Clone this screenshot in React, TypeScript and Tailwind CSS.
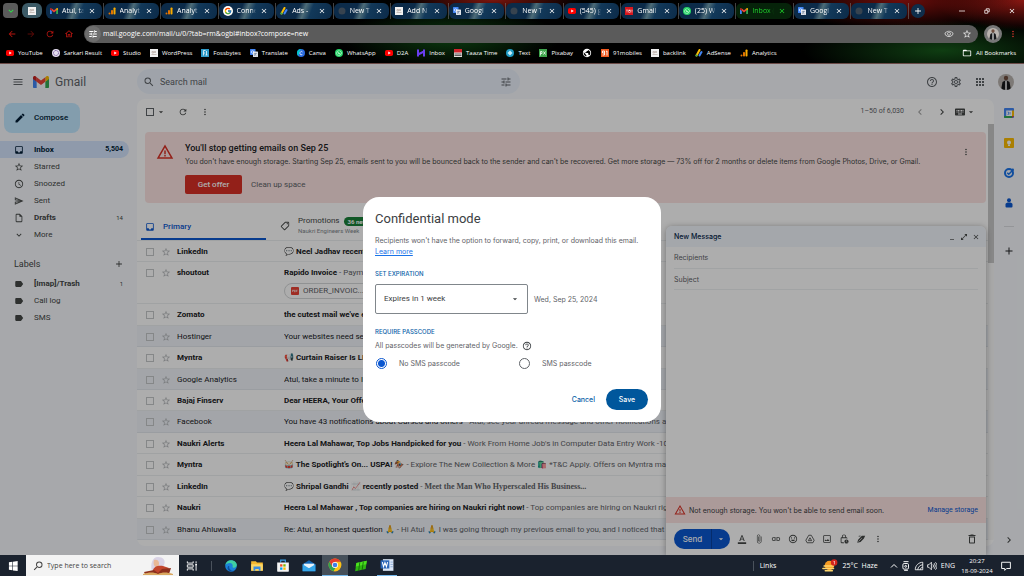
import React from 'react';
import {
  MdAccessTime,
  MdAdd,
  MdApps,
  MdArrowBack,
  MdArrowDropDown,
  MdArrowForward,
  MdAttachFile,
  MdChevronLeft,
  MdChevronRight,
  MdClose,
  MdDeleteOutline,
  MdEdit,
  MdExpandMore,
  MdFormatColorText,
  MdFolderOpen,
  MdHelpOutline,
  MdInbox,
  MdKeyboard,
  MdLabel,
  MdLink,
  MdMenu,
  MdMinimize,
  MdMoreVert,
  MdOpenInFull,
  MdOutlineHome,
  MdOutlineImage,
  MdOutlineInsertDriveFile,
  MdOutlineInsertEmoticon,
  MdOutlineLocalOffer,
  MdOutlineLockClock,
  MdOutlineSend,
  MdOutlineSettings,
  MdOutlineVisibility,
  MdPerson,
  MdPublic,
  MdRefresh,
  MdSearch,
  MdStarBorder,
  MdTune,
  MdWarningAmber,
} from 'react-icons/md';
import { FaWhatsapp } from 'react-icons/fa';
import { FcGoogle } from 'react-icons/fc';

type IconName =
  | 'page' | 'gmail' | 'analytics' | 'google' | 'ads' | 'dark' | 'translate' | 'youtube' | 'toi'
  | 'whatsapp' | 'seal' | 'foss' | 'canva' | 'h' | 'taaza' | 'text' | 'px' | 'globe' | 'n91';

const GmailMark: React.FC<{ className?: string }> = ({ className }) => (
  <svg viewBox="0 0 24 18" className={className} aria-hidden="true">
    <path d="M0 3v13.4C0 17.300.7 18 1.600 18H5.500V8.600z" fill="#4285f4" />
    <path d="M24 3v13.400c0 .900-.7 1.600-1.600 1.600H18.500V8.600z" fill="#34a853" />
    <path d="M18.500 1.700V8.600L24 4.500V2.500C24 .300 21.500-.700 19.800.600z" fill="#fbbc04" />
    <path d="M5.500 8.600V1.700L12 6.600l6.500-4.900v6.900L12 13.500z" fill="#ea4335" />
    <path d="M0 2.500v2l5.500 4.100V1.700L4.200.600C2.500-.700 0 .300 0 2.500z" fill="#c5221f" />
  </svg>
);

const Favicon: React.FC<{ name: IconName }> = ({ name }) => {
  if (name === 'gmail') return <GmailMark className="h-1.5 w-2 shrink-0" />;
  if (name === 'google') return <FcGoogle className="size-2.5 shrink-0 rounded-full bg-white p-px" />;
  if (name === 'whatsapp') return <FaWhatsapp className="size-2 shrink-0 rounded-full bg-[#25d366] p-px text-white" />;
  if (name === 'globe') return <MdPublic className="size-2.5 shrink-0 text-white" />;
  return (
    <svg viewBox="0 0 16 16" className="size-2 shrink-0" aria-hidden="true">
      {name === 'page' && (
        <>
          <rect width="16" height="16" fill="#f1f1f1" />
          <path d="M4 5h3v3H4zM8 5h4M8 7h4M3 11h10" stroke="#a08f85" fill="none" />
        </>
      )}
      {name === 'analytics' && (
        <>
          <rect x="11" y="1" width="4" height="14" rx="1.500" fill="#f9ab00" />
          <rect x="6" y="6" width="4" height="9" rx="1.500" fill="#e37400" />
          <circle cx="3" cy="13" r="2" fill="#e37400" />
        </>
      )}
      {name === 'ads' && (
        <>
          <path d="M9 2 3 13" stroke="#fbbc04" strokeWidth="4" strokeLinecap="round" />
          <path d="M13 6 9 13" stroke="#4285f4" strokeWidth="4" strokeLinecap="round" />
          <circle cx="3" cy="13" r="2.200" fill="#34a853" />
        </>
      )}
      {name === 'dark' && <circle cx="8" cy="8" r="7" fill="#37434f" />}
      {name === 'translate' && (
        <>
          <rect width="11" height="12" rx="1" fill="#4285f4" />
          <rect x="6" y="5" width="10" height="11" rx="1" fill="#dfe3ea" />
          <circle cx="5" cy="6" r="2.500" fill="none" stroke="#fff" strokeWidth="1.300" />
          <path d="M8 9h6M11 8v1c0 2-1 4-3 5M9 10c1 2 3 3 4 4" stroke="#5f7390" fill="none" />
        </>
      )}
      {name === 'youtube' && (
        <>
          <rect y="2" width="16" height="12" rx="3.500" fill="#f00" />
          <path d="m6.500 5.200 5 2.800-5 2.800z" fill="#fff" />
        </>
      )}
      {name === 'toi' && (
        <>
          <rect width="16" height="16" fill="#d8171d" />
          <path d="M2 6h4M4 6v5M13 6h2M14 6v5" stroke="#fff" />
          <rect x="7.500" y="6" width="3" height="5" fill="none" stroke="#fff" />
        </>
      )}
      {name === 'seal' && (
        <>
          <circle cx="8" cy="8" r="8" fill="#e5def0" />
          <circle cx="8" cy="8" r="5" fill="none" stroke="#6a4c93" strokeWidth="2" strokeDasharray="2 1" />
        </>
      )}
      {name === 'foss' && (
        <>
          <rect width="16" height="16" fill="#2e9bc9" />
          <path d="M5 13V3h4M5 8h3M11 4v8M9 12h4" stroke="#fff" strokeWidth="1.500" fill="none" />
        </>
      )}
      {name === 'canva' && (
        <>
          <circle cx="8" cy="8" r="8" fill="#2a6be0" />
          <path d="M0 9a8 8 0 0 1 8-9C6 4 4 8 3 14A8 8 0 0 1 0 9z" fill="#00c4cc" />
          <path d="M11 6c-2-3-6 0-5 4 1 2 4 2 5 0" stroke="#fff" strokeWidth="1.500" fill="none" />
        </>
      )}
      {name === 'h' && <path d="M2 1v14M14 1v14M2 11l12-6" stroke="#6a3df0" strokeWidth="4" />}
      {name === 'taaza' && (
        <>
          <rect width="16" height="16" fill="#e6e0de" />
          <rect width="16" height="7" fill="#d0232b" />
          <path d="M1 10h14M1 13h14" stroke="#333" strokeWidth="1.500" />
        </>
      )}
      {name === 'text' && (
        <>
          <circle cx="8" cy="8" r="8" fill="#1f9bc4" />
          <path d="M8 3 13 8l-5 5-5-5z" fill="#c6f0fb" />
        </>
      )}
      {name === 'px' && (
        <>
          <rect width="16" height="16" fill="#3fa34d" />
          <path d="M3 13V5h3v4H3M9 5l4 6M13 5 9 11" stroke="#fff" strokeWidth="1.500" fill="none" />
        </>
      )}
      {name === 'n91' && (
        <>
          <rect width="16" height="16" fill="#f1591f" />
          <path d="M7 8H3V4h4v8H3M10 5l2-1v9" stroke="#fff" strokeWidth="1.800" fill="none" />
        </>
      )}
    </svg>
  );
};

const tabs: { icon: IconName; title: string; active?: boolean }[] = [
  { icon: 'gmail', title: 'Atul, ta' },
  { icon: 'analytics', title: 'Analyt' },
  { icon: 'analytics', title: 'Analyt' },
  { icon: 'google', title: 'Conne' },
  { icon: 'ads', title: 'Ads - ' },
  { icon: 'dark', title: 'New T' },
  { icon: 'page', title: 'Add N' },
  { icon: 'translate', title: 'Googl' },
  { icon: 'dark', title: 'New T' },
  { icon: 'youtube', title: '(545) g' },
  { icon: 'toi', title: 'Gmail' },
  { icon: 'whatsapp', title: '(25) W' },
  { icon: 'gmail', title: 'Inbox (', active: true },
  { icon: 'translate', title: 'Googl' },
  { icon: 'dark', title: 'New T' },
];

const bookmarks: { icon: IconName; title: string }[] = [
  { icon: 'youtube', title: 'YouTube' },
  { icon: 'seal', title: 'Sarkari Result' },
  { icon: 'youtube', title: 'Studio' },
  { icon: 'page', title: 'WordPress' },
  { icon: 'foss', title: 'Fossbytes' },
  { icon: 'translate', title: 'Translate' },
  { icon: 'canva', title: 'Canva' },
  { icon: 'whatsapp', title: 'WhatsApp' },
  { icon: 'youtube', title: 'D2A' },
  { icon: 'h', title: 'Inbox' },
  { icon: 'taaza', title: 'Taaza Time' },
  { icon: 'text', title: 'Text' },
  { icon: 'px', title: 'Pixabay' },
  { icon: 'globe', title: '' },
  { icon: 'n91', title: '91mobiles' },
  { icon: 'page', title: 'backlink' },
  { icon: 'ads', title: 'AdSense' },
  { icon: 'analytics', title: 'Analytics' },
];

const BrowserChrome: React.FC = () => (
  <header className="shrink-0 border-b border-[#6b4a47] bg-black bg-[radial-gradient(ellipse_120px_30px_at_88%_0%,#6d0d0a,transparent),radial-gradient(ellipse_90px_30px_at_100%_0%,#8a1712,transparent),radial-gradient(ellipse_140px_30px_at_92%_80%,#0f3d12,transparent),radial-gradient(ellipse_110px_30px_at_44%_60%,#0b3a0f,transparent),radial-gradient(ellipse_90px_16px_at_48%_0%,#7a150d,transparent)] font-['Open_Sans',sans-serif] text-[7px] leading-none text-white">
    {/* Tab strip */}
    <div className="flex h-[21px] items-center">
      <button aria-label="Search tabs" className="ml-[3px] flex h-[15px] w-[15px] items-center justify-center rounded bg-[#5b5b5b] text-[#2fe04a]">
        <MdExpandMore className="size-2.5" />
      </button>
      <button aria-label="Pinned tab" className="ml-1 mr-1 flex h-[15px] w-5 items-center justify-center rounded-md bg-[#3c5a66]">
        <Favicon name="page" />
      </button>
      <div className="flex min-w-0 flex-1">
        {tabs.map((tab, i) => (
          <div key={i} className="flex min-w-0 flex-1 items-center border-r border-[#6f6f6f]/60 pr-px">
            <div
              className={
                tab.active
                  ? 'flex h-4 min-w-0 flex-1 items-center gap-1 rounded-md bg-[#06230a] pl-1 pr-1.5 text-[#1fd12b]'
                  : 'flex h-4 min-w-0 flex-1 items-center gap-1 rounded-md bg-[linear-gradient(110deg,#0c2b49_0%,#0c2b49_40%,#4d6c78_50%,#12395a_62%,#0c2b49_100%)] pl-1 pr-1.5'
              }
            >
              <Favicon name={tab.icon} />
              <span className="min-w-0 flex-1 overflow-hidden whitespace-nowrap mask-r-from-75% py-1">{tab.title}</span>
              <button aria-label="Close tab">
                <MdClose className="size-2" />
              </button>
            </div>
          </div>
        ))}
      </div>
      <button aria-label="New tab" className="ml-0.5 mr-6 flex size-3.5 items-center justify-center rounded-full bg-[#0f2d4a]">
        <MdAdd className="size-2.5" />
      </button>
      <button aria-label="Minimize" className="flex w-[25px] justify-center">
        <svg viewBox="0 0 8 8" className="size-1.5"><path d="M0 4h8" stroke="currentColor" /></svg>
      </button>
      <button aria-label="Restore" className="flex w-[25px] justify-center">
        <svg viewBox="0 0 8 8" className="size-1.5" fill="none" stroke="currentColor"><path d="M1 3h4v4H1zM3 3V1h4v4H5" /></svg>
      </button>
      <button aria-label="Close window" className="flex w-[25px] justify-center">
        <MdClose className="size-2" />
      </button>
    </div>

    {/* Toolbar */}
    <div className="flex h-[25px] items-center">
      <div className="flex w-[84px] items-center gap-[9px] pl-[7px] text-[#b3140f]">
        <button aria-label="Back"><MdArrowBack className="size-2.5" /></button>
        <button aria-label="Forward"><MdArrowForward className="size-2.5 opacity-50" /></button>
        <button aria-label="Reload"><MdRefresh className="size-2.5" /></button>
        <button aria-label="Home"><MdOutlineHome className="size-2.5" /></button>
      </div>
      <div className="flex h-[18px] min-w-0 flex-1 items-center rounded-full bg-[#5b5b5b] pl-px pr-1.5">
        <span className="mr-0.5 flex size-4 items-center justify-center rounded-full bg-[#6e6e6e]">
          <MdTune className="size-2.5" />
        </span>
        <input
          aria-label="Address"
          className="min-w-0 flex-1 bg-transparent text-[7px] outline-none"
          defaultValue="mail.google.com/mail/u/0/?tab=rm&ogbl#inbox?compose=new"
        />
        <MdOutlineVisibility className="mr-2 size-2.5 text-[#d0d0d0]" />
        <MdStarBorder className="size-2.5 text-[#e4e4e4]" />
      </div>
      <button aria-label="Profile" className="ml-1.5 flex size-[18px] items-center justify-center rounded-full bg-[#777]">
        <Avatar className="size-3" />
      </button>
      <button aria-label="Browser menu" className="mx-1.5 text-[#d8362f]">
        <MdMoreVert className="size-2.5" />
      </button>
    </div>

    {/* Bookmarks */}
    <nav aria-label="Bookmarks" className="flex h-[17px] items-start pl-1.5 pr-2 pt-0.5 text-[6px]">
      <div className="flex min-w-0 flex-1 items-center gap-[9px]">
        {bookmarks.map((b, i) => (
          <a key={i} href="#" aria-label={b.title || 'Website'} className="flex items-center gap-1 whitespace-nowrap leading-[10px]">
            <Favicon name={b.icon} />
            {b.title}
          </a>
        ))}
      </div>
      <a href="#" className="flex items-center gap-1 leading-[10px]">
        <MdFolderOpen className="size-2.5" />
        All Bookmarks
      </a>
    </nav>
  </header>
);

const Avatar: React.FC<{ className?: string }> = ({ className }) => (
  <svg viewBox="0 0 16 16" className={className} aria-hidden="true">
    <clipPath id="face"><circle cx="8" cy="8" r="8" /></clipPath>
    <g clipPath="url(#face)">
      <rect width="16" height="16" fill="#b9b3ae" />
      <circle cx="8" cy="4" r="2.200" fill="#6d4c3d" />
      <path d="M3 16 4.500 8 8 6l3.500 2L13 16z" fill="#15171a" />
      <path d="M7.200 6.500h1.600V16H7.200z" fill="#e7e7e7" />
    </g>
  </svg>
);

const IconButton: React.FC<{ label: string; className?: string; children: React.ReactNode }> = ({ label, className, children }) => (
  <button aria-label={label} className={className ?? 'flex size-3 items-center justify-center'}>
    {children}
  </button>
);

const folders = [
  { icon: MdInbox, name: 'Inbox', count: '5,504', active: true },
  { icon: MdStarBorder, name: 'Starred' },
  { icon: MdAccessTime, name: 'Snoozed' },
  { icon: MdOutlineSend, name: 'Sent' },
  { icon: MdOutlineInsertDriveFile, name: 'Drafts', count: '14', bold: true },
  { icon: MdExpandMore, name: 'More' },
];

const labels = [
  { name: '[Imap]/Trash', count: '1', bold: true },
  { name: 'Call log' },
  { name: 'SMS' },
];

const Sidebar: React.FC = () => (
  <aside className="w-[137px] shrink-0 pt-1 text-[8px]">
    <button className="ml-1 flex h-[30px] w-[76px] items-center rounded-lg bg-[#c2e7ff] pl-2.5 font-medium text-[#001d35]">
      <MdEdit className="mr-2 size-3" />
      Compose
    </button>
    <nav aria-label="Folders" className="mt-2 pr-2">
      {folders.map((f) => (
        <a
          key={f.name}
          href="#"
          className={
            f.active
              ? 'flex h-[17px] items-center rounded-r-full bg-[#d3e3fd] pl-3.5 pr-1.5 font-bold text-[#001d35]'
              : 'flex h-[17px] items-center pl-3.5 pr-1.5'
          }
        >
          <f.icon className="mr-2.5 size-2.5" />
          <span className={f.bold ? 'flex-1 font-bold' : 'flex-1'}>{f.name}</span>
          <span className={f.active ? 'text-[7px]' : 'text-[6px]'}>{f.count}</span>
        </a>
      ))}
    </nav>
    <div className="mb-[3px] mt-[13px] flex h-4 items-center justify-between pl-3.5 pr-3 text-[9px]">
      Labels
      <IconButton label="Create label"><MdAdd className="size-2.5" /></IconButton>
    </div>
    <nav aria-label="Labels" className="pr-2">
      {labels.map((l) => (
        <a key={l.name} href="#" className="flex h-[17px] items-center pl-3.5 pr-1.5">
          <MdLabel className="mr-2.5 size-2.5" />
          <span className={l.bold ? 'flex-1 font-bold' : 'flex-1'}>{l.name}</span>
          <span className="text-[6px]">{l.count}</span>
        </a>
      ))}
    </nav>
  </aside>
);

type Mail = { from: string; subject: string; snippet?: string; read?: boolean; attachment?: string; serif?: boolean };

const mails: Mail[] = [
  { from: 'LinkedIn', subject: '💬 Neel Jadhav recently posted', snippet: 'Ready to grow your career? Start here' },
  { from: 'shoutout', subject: 'Rapido Invoice', snippet: 'Payment receipt for your ride. Thank you for riding', attachment: 'ORDER_INVOIC...' },
  { from: 'Zomato', subject: "the cutest mail we've ever sent", snippet: 'open it for a treat' },
  { from: 'Hostinger', subject: 'Your websites need security', snippet: 'Keep your sites safe and running with daily backups', read: true },
  { from: 'Myntra', subject: '📢 Curtain Raiser Is LIVE', snippet: 'Top brands at the lowest prices. *T&C Apply. Offers on Myntra' },
  { from: 'Google Analytics', subject: 'Atul, take a minute to link your accounts', snippet: 'Get more from your data', read: true },
  { from: 'Bajaj Finserv', subject: 'Dear HEERA, Your Offer Is Waiting', snippet: 'Check your pre-approved limit today. Minimum documents' },
  { from: 'Facebook', subject: 'You have 43 notifications about Cursed and others', snippet: 'Atul, see your unread message and other notifications about you', read: true },
  { from: 'Naukri Alerts', subject: 'Heera Lal Mahawar, Top Jobs Handpicked for you', snippet: "Work From Home Job's in Computer Data Entry Work -1000 openings" },
  { from: 'Myntra', subject: "🥁 The Spotlight's On... USPA! 🏇", snippet: 'Explore The New Collection & More 🛍️ *T&C Apply. Offers on Myntra marketplace' },
  { from: 'LinkedIn', subject: '💬 Shripal Gandhi 📈 recently posted', snippet: 'Meet the Man Who Hyperscaled His Business...', serif: true },
  { from: 'Naukri', subject: 'Heera Lal Mahawar , Top companies are hiring on Naukri right now!', snippet: 'Top companies are hiring on Naukri right now' },
  { from: 'Bhanu Ahluwalia', subject: 'Re: Atul, an honest question 🙏', snippet: 'Hi Atul 🙏 I was going through my previous email to you, and I noticed that you have not', read: true },
];

const MailRow: React.FC<{ mail: Mail }> = ({ mail }) => (
  <li
    className={
      mail.attachment
        ? 'flex min-h-0 flex-2 items-start border-b border-[#eceff1] pl-[9px]'
        : mail.read
          ? 'flex min-h-0 flex-1 items-start border-b border-[#e4e8ee] bg-[#f0f4fa] pl-[9px]'
          : 'flex min-h-0 flex-1 items-start border-b border-[#eceff1] pl-[9px]'
    }
  >
    <input
      type="checkbox"
      aria-label={`Select mail from ${mail.from}`}
      className="mt-[7px] size-2 shrink-0 appearance-none border border-[#c4c7c9]"
    />
    <IconButton label="Star" className="ml-[7px] mt-1.5 text-[#b4b7ba]"><MdStarBorder className="size-2.5" /></IconButton>
    <span className={mail.read ? 'ml-1.5 w-[107px] shrink-0 leading-[22px]' : 'ml-1.5 w-[107px] shrink-0 font-bold leading-[22px]'}>
      {mail.from}
    </span>
    <div className="min-w-0 flex-1">
      <p className="overflow-hidden whitespace-nowrap leading-[22px] text-[#5f6368]">
        <span className={mail.read ? 'text-[#202124]' : 'font-bold text-[#202124]'}>{mail.subject}</span>
        {' - '}
        <span className={mail.serif ? "font-['Liberation_Serif',serif] font-bold" : ''}>{mail.snippet}</span>
      </p>
      {mail.attachment && (
        <a href="#" className="-mt-px inline-flex h-4 items-center gap-1 rounded-full border border-[#d5d7d9] px-1.5 text-[#5f6368]">
          <svg viewBox="0 0 16 16" className="size-2" aria-hidden="true">
            <rect width="16" height="16" rx="2" fill="#ea4335" />
            <path d="M3 10V6h2v2H3M7 6v4h1.500V6zM11 10V6h2M11 8h2" stroke="#fff" fill="none" />
          </svg>
          {mail.attachment}
        </a>
      )}
    </div>
  </li>
);

const MailPanel: React.FC = () => (
  <section className="flex min-w-0 flex-1 flex-col overflow-hidden rounded-lg bg-white pb-1.5 text-[8px]">
    <div className="flex h-[25px] shrink-0 items-center pl-[9px] pr-[18px]">
      <input type="checkbox" aria-label="Select all" className="size-2 appearance-none border border-[#5f6368]" />
      <IconButton label="Select options" className="ml-0.5"><MdArrowDropDown className="size-2.5" /></IconButton>
      <IconButton label="Refresh" className="ml-3"><MdRefresh className="size-2.5" /></IconButton>
      <IconButton label="More" className="ml-3"><MdMoreVert className="size-2.5" /></IconButton>
      <span className="ml-auto text-[7px] text-[#5f6368]">1–50 of 6,030</span>
      <IconButton label="Newer" className="ml-2.5 text-[#a0a0a0]"><MdChevronLeft className="size-3" /></IconButton>
      <IconButton label="Older" className="ml-2.5"><MdChevronRight className="size-3" /></IconButton>
      <IconButton label="Input tools" className="ml-1.5 flex items-center"><MdKeyboard className="size-3" /><MdArrowDropDown className="size-2.5" /></IconButton>
    </div>
    <div className="flex min-h-0 flex-1">
      <div className="flex min-w-0 flex-1 flex-col">
        <div className="ml-2 mr-0.5 mt-2 flex h-[71px] shrink-0 rounded bg-[#fce4e2] pl-[11px] pt-[11px]">
          <MdWarningAmber className="mr-[11px] size-[18px] shrink-0 text-[#d93025]" />
          <div className="min-w-0 flex-1">
            <h2 className="text-[9px] font-medium leading-[11px] text-[#202124]">You'll stop getting emails on Sep 25</h2>
            <p className="mt-0.5 whitespace-nowrap font-['Inter',sans-serif] text-[7px] leading-[12px]">
              You don't have enough storage. Starting Sep 25, emails sent to you will be bounced back to the sender and can't be
              recovered. Get more storage — 73% off for 2 months or delete items from Google Photos, Drive, or Gmail.
            </p>
            <div className="mt-[7px] flex items-center gap-[9px]">
              <button className="h-[19px] w-[57px] rounded-xs bg-[#d93025] font-medium text-white">Get offer</button>
              <button className="text-[#5f6368]">Clean up space</button>
            </div>
          </div>
          <IconButton label="Banner options" className="mr-[15px] mt-1 flex size-2.5"><MdMoreVert className="size-2.5" /></IconButton>
        </div>

        <div className="mt-2 flex h-[30px] shrink-0 border-b border-[#eceff1]">
          <button className="ml-1 flex w-[125px] items-center border-b-2 border-[#0b57d0] pl-1 pt-1 font-medium text-[#0b57d0]">
            <MdInbox className="mr-2 size-2.5" />
            Primary
          </button>
          <button className="ml-3.5 flex items-center pt-px text-left">
            <MdOutlineLocalOffer className="mr-2 size-2.5 -scale-x-100" />
            <span>
              <span className="flex items-center gap-1 leading-[10px]">
                Promotions
                <span className="rounded-full bg-[#188038] px-1 text-[6px] font-bold leading-[9px] text-white">36 new</span>
              </span>
              <span className="block text-[6px] leading-[10px] text-[#80868b]">Naukri Engineers Week</span>
            </span>
          </button>
        </div>

        <ul className="flex min-h-0 flex-1 flex-col text-[#202124]">
          {mails.map((m, i) => (
            <MailRow key={i} mail={m} />
          ))}
        </ul>
      </div>
      <div className="w-1.5 bg-[#f8f8f8]">
        <div className="h-1/3 bg-[#c8c8c8]" />
      </div>
    </div>
  </section>
);

const SidePanel: React.FC = () => (
  <aside className="flex w-[30px] shrink-0 flex-col items-center pt-[9px]">
    <div className="flex flex-col items-center gap-5">
      <a href="#" aria-label="Calendar">
        <svg viewBox="0 0 20 20" className="size-2.5">
          <rect width="20" height="20" rx="2" fill="#4285f4" />
          <path d="M16 5h4v11h-4z" fill="#fbbc04" />
          <path d="M0 16h16v4H2a2 2 0 0 1-2-2z" fill="#34a853" />
          <path d="M16 16h4l-4 4z" fill="#ea4335" />
          <path d="M4.500 5H16v11H4.500z" fill="#fff" />
          <path d="M7 8h2v5H7M12 8v5" stroke="#4285f4" strokeWidth="1.500" fill="none" />
        </svg>
      </a>
      <a href="#" aria-label="Keep">
        <svg viewBox="0 0 20 20" className="size-2.5">
          <rect width="20" height="20" rx="2" fill="#fbbc04" />
          <circle cx="10" cy="9" r="4" fill="#fff" />
          <path d="M8 13h4v3H8z" fill="#fff" />
        </svg>
      </a>
      <a href="#" aria-label="Tasks">
        <svg viewBox="0 0 20 20" className="size-2.5" fill="none">
          <circle cx="10" cy="10" r="8" stroke="#1a73e8" strokeWidth="4" />
          <path d="m6.500 9.500 3 3L18 4" stroke="#1a73e8" strokeWidth="3" />
          <circle cx="17.500" cy="3.500" r="2.500" fill="#1a73e8" />
        </svg>
      </a>
      <a href="#" aria-label="Contacts">
        <svg viewBox="0 0 20 20" className="size-2.5" fill="#0b57d0">
          <circle cx="10" cy="4.500" r="4" />
          <path d="M3 13c0-3 3-4 7-4s7 1 7 4v4a2 2 0 0 1-2 2H5a2 2 0 0 1-2-2z" />
        </svg>
      </a>
    </div>
    <hr className="mt-[18px] w-2.5 border-[#dadce0]" />
    <IconButton label="Get add-ons" className="mt-[18px] text-[#202124]"><MdAdd className="size-3" /></IconButton>
    <IconButton label="Hide side panel" className="mt-auto"><MdChevronRight className="size-3" /></IconButton>
  </aside>
);

const ComposeWindow: React.FC = () => (
  <section
    aria-label="New Message"
    className="absolute bottom-0 right-[38px] flex h-[329px] w-[320px] flex-col rounded-t-md bg-white font-['Inter',sans-serif] shadow-[0_1px_6px_rgba(0,0,0,0.35)]"
  >
    <div className="flex h-[21px] items-center rounded-t-md bg-[#f2f6fc] pl-2 pr-1">
      <h2 className="flex-1 font-medium text-[#041e49]">New Message</h2>
      <IconButton label="Minimize"><MdMinimize className="size-2" /></IconButton>
      <IconButton label="Full screen"><MdOpenInFull className="size-2" /></IconButton>
      <IconButton label="Close"><MdClose className="size-2" /></IconButton>
    </div>
    <input aria-label="Recipients" placeholder="Recipients" className="mx-2 h-[22px] border-b border-[#eef0f2] outline-none placeholder:text-[#5f6368]" />
    <input aria-label="Subject" placeholder="Subject" className="mx-2 h-[21px] border-b border-[#eef0f2] outline-none placeholder:text-[#5f6368]" />
    <textarea aria-label="Message body" className="min-h-0 flex-1 resize-none px-2 outline-none" />
    <div className="flex h-[26px] items-center bg-[#fce4e2] px-2 text-[#3c4043]">
      <MdWarningAmber className="mr-[3px] size-3 text-[#d93025]" />
      <span className="flex-1">Not enough storage. You won't be able to send email soon.</span>
      <a href="#" className="font-['Roboto',sans-serif] text-[#0b57d0]">Manage storage</a>
    </div>
    <div className="flex h-8 items-center gap-[5px] pl-2 pr-2">
      <div className="mr-px flex h-5 w-14 overflow-hidden rounded-full bg-[#0b57d0] text-white">
        <button className="w-[38px] border-r border-[#0842a0] text-[8px] font-medium">Send</button>
        <button aria-label="More send options" className="flex flex-1 items-center justify-center"><MdArrowDropDown className="size-2.5" /></button>
      </div>
      <IconButton label="Formatting"><MdFormatColorText className="size-2.5" /></IconButton>
      <IconButton label="Attach files"><MdAttachFile className="size-2.5" /></IconButton>
      <IconButton label="Insert link"><MdLink className="size-2.5" /></IconButton>
      <IconButton label="Insert emoji"><MdOutlineInsertEmoticon className="size-2.5" /></IconButton>
      <IconButton label="Insert from Drive">
        <svg viewBox="0 0 24 24" className="size-2.5" fill="none" stroke="currentColor" strokeWidth="2" strokeLinejoin="round">
          <path d="M9 3h6l7 12-3 6H5l-3-6zM12 9l4 7H8z" />
        </svg>
      </IconButton>
      <IconButton label="Insert photo"><MdOutlineImage className="size-2.5" /></IconButton>
      <IconButton label="Confidential mode"><MdOutlineLockClock className="size-2.5" /></IconButton>
      <IconButton label="Insert signature">
        <svg viewBox="0 0 24 24" className="size-2.5" fill="currentColor">
          <path d="M3 21l2-7L14 4h8l-3 7-8 8-8 2zM7 4h5l-2 2H6z" />
          <path d="m6 18 8-8" stroke="#fff" strokeWidth="1.500" />
        </svg>
      </IconButton>
      <IconButton label="More options"><MdMoreVert className="size-2.5" /></IconButton>
      <IconButton label="Discard draft" className="ml-auto"><MdDeleteOutline className="size-3" /></IconButton>
    </div>
  </section>
);

const ConfidentialDialog: React.FC = () => (
  <div className="absolute inset-0 flex items-center justify-center bg-black/32">
    <form
      role="dialog"
      aria-label="Confidential mode"
      className="flex w-[298px] flex-col rounded-2xl bg-white px-3 pb-3 pt-[13px] font-['Inter',sans-serif] text-[#5f6368]"
      onSubmit={(e) => e.preventDefault()}
    >
      <h1 className="font-['Roboto',sans-serif] text-[13px] leading-[18px] text-[#3c4043]">Confidential mode</h1>
      <p className="mt-[7px] leading-[11px]">
        Recipients won't have the option to forward, copy, print, or download this email.{' '}
        <a href="#" className="block w-fit text-[#1a73e8] underline">Learn more</a>
      </p>
      <label htmlFor="expiration" className="mt-3 text-[6px] font-medium leading-[10px] text-[#0b62a8]">SET EXPIRATION</label>
      <div className="mt-[5px] flex items-center gap-1.5">
        <div className="relative">
          <select id="expiration" className="h-[30px] w-[153px] appearance-none rounded-xs border border-[#80868b] bg-white pl-2 font-['Roboto',sans-serif] text-[8px] text-[#3c4043]">
            <option>Expires in 1 week</option>
          </select>
          <MdArrowDropDown className="pointer-events-none absolute right-2 top-2.5 size-2.5 text-[#3c4043]" />
        </div>
        <span>Wed, Sep 25, 2024</span>
      </div>
      <fieldset className="mt-[13px]">
        <legend className="text-[6px] font-medium leading-[10px] text-[#0b62a8]">REQUIRE PASSCODE</legend>
        <p className="mt-[3px] flex items-center gap-1 leading-3">
          All passcodes will be generated by Google.
          <MdHelpOutline className="size-2.5 text-[#3c4043]" />
        </p>
        <div className="ml-px mt-1.5 flex">
          <label className="flex w-[143px] items-center gap-3">
            <input type="radio" name="passcode" defaultChecked className="size-[11px] appearance-none rounded-full border border-[#5f6368] checked:border-[#0b57d0] checked:bg-[radial-gradient(circle,#0b57d0_3px,transparent_4px)]" />
            No SMS passcode
          </label>
          <label className="flex items-center gap-3">
            <input type="radio" name="passcode" className="size-[11px] appearance-none rounded-full border border-[#5f6368] checked:border-[#0b57d0] checked:bg-[radial-gradient(circle,#0b57d0_3px,transparent_4px)]" />
            SMS passcode
          </label>
        </div>
      </fieldset>
      <div className="mt-5 flex items-center justify-end gap-[11px] pr-px">
        <button type="button" className="font-medium text-[#0b62a8]">Cancel</button>
        <button type="submit" className="h-[21px] w-[42px] rounded-full bg-[#00579c] font-medium text-white">Save</button>
      </div>
    </form>
  </div>
);

const Gmail: React.FC = () => (
  <main className="relative flex min-h-0 flex-1 flex-col overflow-hidden bg-[#f6f8fc] pb-[9px] font-['Roboto',sans-serif] text-[7px] leading-none text-[#444746]">
    <header className="flex h-[35px] shrink-0 items-center text-[#5f6368]">
      <div className="flex w-[137px] items-center pl-3">
        <IconButton label="Main menu"><MdMenu className="size-3.5" /></IconButton>
        <GmailMark className="ml-[9px] h-3 w-4" />
        <span className="ml-1.5 text-[12px]">Gmail</span>
      </div>
      <label className="flex h-[25px] w-[383px] items-center rounded-full bg-[#eaf1fb] pl-1.5 pr-2">
        <MdSearch className="mr-[5px] size-3" />
        <input type="search" aria-label="Search mail" placeholder="Search mail" className="min-w-0 flex-1 bg-transparent text-[9px] outline-none placeholder:text-[#5f6368]" />
        <MdTune className="size-3" />
      </label>
      <div className="ml-auto flex items-center gap-3 pr-3">
        <IconButton label="Support"><MdHelpOutline className="size-3" /></IconButton>
        <IconButton label="Settings"><MdOutlineSettings className="size-3" /></IconButton>
        <IconButton label="Google apps"><MdApps className="size-3" /></IconButton>
        <IconButton label="Account" className="-mr-0.5"><Avatar className="size-4" /></IconButton>
      </div>
    </header>
    <div className="flex min-h-0 flex-1">
      <Sidebar />
      <MailPanel />
      <SidePanel />
    </div>
    <ComposeWindow />
    <ConfidentialDialog />
  </main>
);

const TaskButton: React.FC<{ label: string; state?: 'active' | 'open'; children: React.ReactNode }> = ({ label, state, children }) => (
  <button
    aria-label={label}
    className={
      state === 'active'
        ? 'flex h-full w-[26px] items-center justify-center border-b border-[#76b9ed] bg-[#46505a]'
        : state === 'open'
          ? 'mx-[3px] flex h-full w-5 items-center justify-center border-b border-[#76b9ed]'
          : 'flex h-full w-[26px] items-center justify-center'
    }
  >
    <svg viewBox="0 0 24 24" className="size-3.5">{children}</svg>
  </button>
);

const Taskbar: React.FC = () => (
  <footer className="flex h-[21px] shrink-0 items-center bg-[#1a222e] font-['Open_Sans',sans-serif] text-[7px] leading-none text-white">
    <TaskButton label="Start">
      <path d="M5 5.500 11 4.700V11.500H5zM12 4.500 20 3.500V11.500H12zM5 12.500H11V19.300L5 18.500zM12 12.500H20V20.500L12 19.500z" fill="#fff" />
    </TaskButton>
    <label className="flex h-full w-[153px] items-center bg-[#f3f3f3] pl-1.5 pr-1.5 text-[#444]">
      <MdSearch className="mr-[3px] size-3 -scale-x-100" />
      <input aria-label="Search" placeholder="Type here to search" className="min-w-0 flex-1 bg-transparent text-[7px] outline-none placeholder:text-[#444]" />
      <svg viewBox="0 0 30 20" className="h-5 w-[30px]" aria-hidden="true">
        <path d="M9 15C7 9 9 1 15 1c5 0 8 3 6 8l-4 6z" fill="#d9d3e6" />
        <path d="M11 4c2-1 5 0 5 3s-1 4-3 4-3-4-2-7z" fill="#e9b896" />
        <path d="M10 14c1-4 6-5 10-4l6 2-3 5H10z" fill="#c2452d" />
        <path d="m1 16 10-2 4 3 4-4 9-1-2 6H2z" fill="#8c2f1d" />
        <path d="M0 18c6-2 11-2 15 0 4-2 9-2 15 0v1H0z" fill="#d9a860" />
      </svg>
    </label>
    <TaskButton label="Task view">
      <path d="M4 4v3h10V4M4 20v-3h10v3M4 10h10v4H4zM19 4v3M19 11v9" fill="none" stroke="#fff" strokeWidth="1.600" />
      <path d="M17.500 8h3v3h-3z" fill="#fff" />
    </TaskButton>
    <span className="mx-1.5 h-2.5 w-px bg-[#4a525c]" />
    <TaskButton label="Edge">
      <circle cx="12" cy="12" r="10" fill="#1b82d8" />
      <path d="M2 11C3 5 7 2 12 2c6 0 10 4 10 8 0 3-2 5-5 5-2 0-3-1-2-3 0-3-2-5-5-5-4 0-7 2-8 4z" fill="#3fd0a3" />
      <path d="M9 12c-1 5 3 9 9 8-4 3-11 2-12-4 0-3 1-4 3-4z" fill="#0c4f9e" />
    </TaskButton>
    <TaskButton label="File Explorer">
      <path d="M2 4h8l2 2h10v14H2z" fill="#f5b931" />
      <path d="M2 9h20v11H2z" fill="#fcd666" />
      <path d="M6 13h12v7h-3v-3H9v3H6z" fill="#3b8de0" />
    </TaskButton>
    <TaskButton label="Store">
      <path d="M8 6V2h8v4" fill="none" stroke="#3ba0e6" strokeWidth="2" />
      <path d="M2 6h20v14a2 2 0 0 1-2 2H4a2 2 0 0 1-2-2z" fill="#f4f4f4" />
      <path d="M7 9h4v4H7z" fill="#f25022" /><path d="M12.500 9h4v4h-4z" fill="#7fba00" />
      <path d="M7 14.500h4v4H7z" fill="#00a4ef" /><path d="M12.500 14.500h4v4h-4z" fill="#ffb900" />
    </TaskButton>
    <TaskButton label="Mail">
      <path d="M1 9 12 2l11 7v12H1z" fill="#1066b5" />
      <path d="M3 8h18v8H3z" fill="#e8f3fb" />
      <path d="m1 9 11 7 11-7v12H1z" fill="#35a6ea" />
    </TaskButton>
    <TaskButton label="Chrome" state="active">
      <circle cx="12" cy="12" r="11" fill="#fbc116" />
      <path d="M12 1a11 11 0 0 1 9.600 5.500H12L7 15 2.400 6.500A11 11 0 0 1 12 1z" fill="#e33b2e" />
      <path d="M2.400 6.500 7.500 15l5 2-3 5.700A11 11 0 0 1 2.400 6.500z" fill="#30a350" />
      <circle cx="12" cy="12" r="5.200" fill="#fff" /><circle cx="12" cy="12" r="4" fill="#3f7fe8" />
    </TaskButton>
    <TaskButton label="Media">
      <path d="M4 7 22 3 20 17 2 21z" fill="#2fb512" />
      <path d="M4 7 22 3 21 9 3 13z" fill="#4be01e" />
      <path d="M10 5.500 8 20M16 4.500 14 18.500" stroke="#0c5c06" strokeWidth="1.300" />
    </TaskButton>
    <TaskButton label="Word" state="open">
      <path d="M5 2h18v20H5z" fill="#dbe7f7" />
      <path d="M1 4h15v14H1z" fill="#2b66b8" />
      <path d="m4 7 2 8 2.500-7L11 15l2-8" fill="none" stroke="#fff" strokeWidth="1.800" />
      <path d="M18 7h4M18 11h4M18 15h4" stroke="#5b86c4" />
    </TaskButton>

    <span className="ml-auto h-2.5 w-px bg-[#4a525c]" />
    <span className="ml-1.5 mr-[46px]">Links</span>
    <button className="flex items-center gap-1">
      <svg viewBox="0 0 26 22" className="h-[13px] w-4" aria-hidden="true">
        <circle cx="12" cy="11" r="8" fill="#f59b23" />
        <path d="M3 12h16M1 16h18M5 20h12" stroke="#ffd66b" strokeWidth="2.500" strokeLinecap="round" />
        <circle cx="20" cy="6" r="5.500" fill="#d3251c" />
        <path d="m19 5 1.500-1.500V9" stroke="#fff" fill="none" />
      </svg>
      25°C&nbsp; Haze
    </button>
    <div className="ml-3 flex items-center gap-[3px]">
      <svg viewBox="0 0 16 16" className="size-2" fill="none" stroke="#fff" strokeWidth="2"><path d="m2 11 6-6 6 6" /></svg>
      <svg viewBox="0 0 16 16" className="size-2.5" fill="none" stroke="#fff" strokeWidth="1.500"><rect x="3" y="4" width="9" height="9" rx="2" /><circle cx="7.500" cy="8.500" r="1.500" /><path d="M4 1h8M5 15h6" /></svg>
      <svg viewBox="0 0 16 16" className="size-2.5" fill="none" stroke="#fff" strokeWidth="1.300"><path d="M2 14C2 7 8 2 14 2M6 14c0-4 4-8 8-8M10 14c0-2 2-4 4-4M14 2v12H2" /></svg>
      <svg viewBox="0 0 16 16" className="size-2.5" fill="none" stroke="#fff" strokeWidth="1.300"><path d="M1 6v4h2l4 4V2L3 6zM9.500 5.500a4 4 0 0 1 0 5M11.500 3.500a7 7 0 0 1 0 9M13.500 2a9 9 0 0 1 0 12" /></svg>
      <span className="ml-px">ENG</span>
    </div>
    <time className="ml-1.5 flex w-8 flex-col items-center whitespace-nowrap text-[6px] leading-[10px]">
      <span>20:27</span>
      <span>18-09-2024</span>
    </time>
    <button aria-label="Notifications" className="ml-2 mr-[13px]">
      <svg viewBox="0 0 16 16" className="size-2.5" fill="none" stroke="#fff" strokeWidth="1.500"><path d="M1 2h14v10H9l-3 3v-3H1z" /></svg>
    </button>
  </footer>
);

const App: React.FC = () => (
  <div className="flex h-screen flex-col overflow-hidden">
    <BrowserChrome />
    <Gmail />
    <Taskbar />
  </div>
);

export default App;
